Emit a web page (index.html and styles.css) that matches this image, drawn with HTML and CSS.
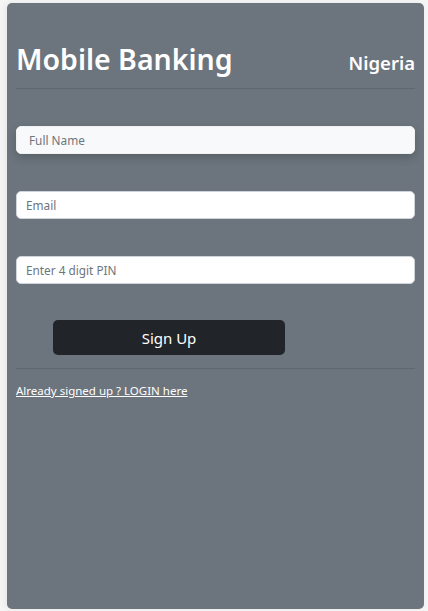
FILE: index.html
```html
<!DOCTYPE html>
<html>
<head>
<meta charset="utf-8">
<link rel="stylesheet" href="styles.css">
</head>
<body>
<div class="card">
  <header class="head">
    <h1 class="title">Mobile Banking</h1>
    <span class="country">Nigeria</span>
  </header>
  <hr class="rule">
  <form class="form">
    <input class="field field-first" type="text" placeholder="Full Name">
    <input class="field" type="email" placeholder="Email">
    <input class="field field-last" type="password" placeholder="Enter 4 digit PIN">
    <button class="btn" type="button">Sign Up</button>
  </form>
  <hr class="rule rule-bottom">
  <a class="link" href="#">Already signed up ? LOGIN here</a>
</div>
</body>
</html>
```
FILE: styles.css
```css
* { box-sizing: border-box; }
html, body { margin: 0; padding: 0; }
body {
  background: #f5f5f5;
  font-family: "Noto Sans", "Open Sans", sans-serif;
  height: 611px;
  overflow: hidden;
}
.card {
  margin: 3px 4px 0 7px;
  height: 606px;
  background: #6c757d;
  border-radius: 5px;
  padding: 0 9px 0 9px;
  box-shadow: -2px 0 6px rgba(0,0,0,0.06);
}
.head {
  display: flex;
  justify-content: space-between;
  align-items: baseline;
  padding-top: 38px;
}
.title {
  margin: 0;
  color: #fff;
  font-size: 28.5px;
  font-weight: 600;
  line-height: 36px;
}
.country {
  color: #fff;
  font-size: 18.5px;
  font-weight: 600;
}
.rule {
  border: 0;
  border-top: 1px solid #5f666d;
  margin: 11px 0 0 0;
}
.form {
  display: flex;
  flex-direction: column;
  padding-top: 37px;
}
.field {
  height: 28px;
  border: 1px solid #ced4da;
  border-radius: 5px;
  background: #fff;
  padding: 0 9px;
  font-family: inherit;
  font-size: 11.8px;
  color: #495057;
  margin-bottom: 37px;
}
.field-last { margin-bottom: 36px; }
.field::placeholder { color: #6c757d; }
.field-first {
  background: #f8f9fa;
  border-color: #f0f1f2;
  padding-left: 12px;
  box-shadow: 0 4px 10px rgba(0,0,0,0.18);
}
.btn {
  align-self: flex-start;
  margin-left: 37px;
  width: 232px;
  height: 35px;
  background: #212529;
  color: #fff;
  border: 0;
  border-radius: 5px;
  font-family: inherit;
  font-size: 15px;
  margin-bottom: 13px;
}
.rule-bottom { margin-top: 0; }
.link {
  display: inline-block;
  margin-top: 14px;
  color: #fff;
  font-size: 11.5px;
  text-decoration: underline;
}
```
